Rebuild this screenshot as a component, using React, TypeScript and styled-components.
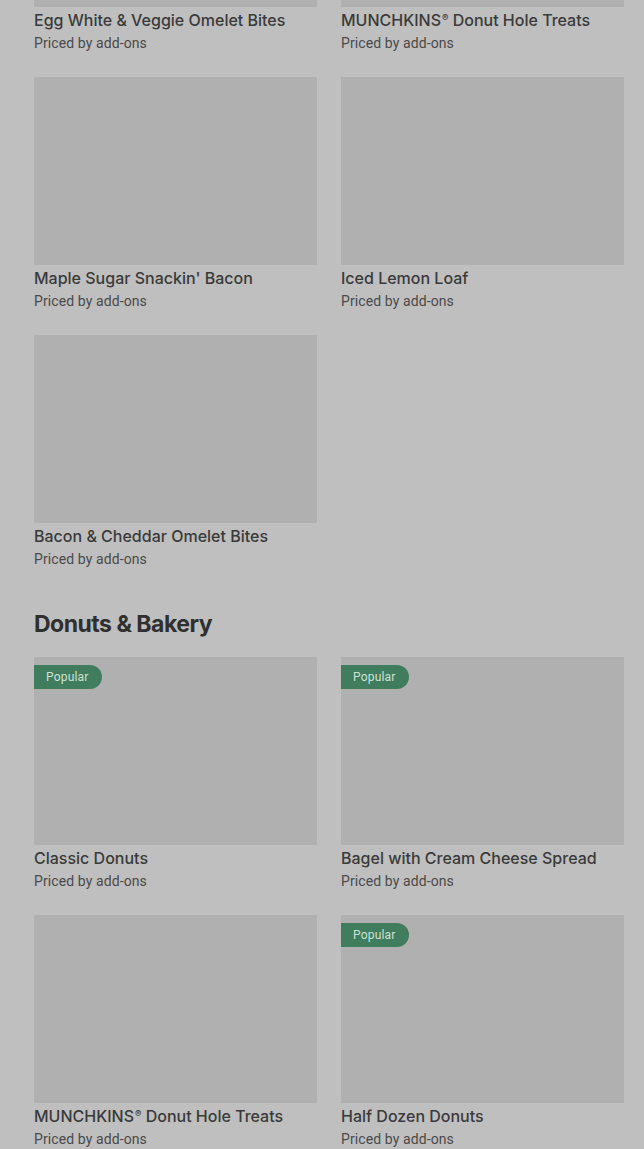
import React from "react";
import styled, { createGlobalStyle } from "styled-components";

const Global = createGlobalStyle`
  html, body { margin: 0; padding: 0; background: #bfbfbf; }
  body { font-family: Roboto, "Noto Sans", sans-serif; overflow: hidden; }
`;

const Page = styled.div`
  width: 644px;
  height: 1149px;
  overflow: hidden;
  background: #bfbfbf;
  box-sizing: border-box;
  padding: 0 20px 0 34px;
`;

const Shift = styled.div`
  margin-top: -181px;
`;

const Grid = styled.div`
  display: grid;
  grid-template-columns: 283px 283px;
  column-gap: 24px;
  row-gap: 24px;
`;

const Heading = styled.h2`
  margin: 39px 0 17px;
  font-family: Inter, "Noto Sans", sans-serif;
  font-size: 23px;
  line-height: 32px;
  font-weight: 700;
  letter-spacing: -0.5px;
  color: #2f2f2f;
`;

const Card = styled.div`
  display: flex;
  flex-direction: column;
`;

const Thumb = styled.div`
  position: relative;
  height: 188px;
  background: #b0b0b0;
`;

const Badge = styled.span`
  position: absolute;
  left: 0;
  top: 8px;
  height: 24px;
  padding: 0 13px 0 12px;
  display: flex;
  align-items: center;
  background: #3f7d5e;
  color: #cfe0d6;
  font-size: 12px;
  letter-spacing: 0.2px;
  border-radius: 0 12px 12px 0;
`;

const Title = styled.div`
  margin-top: 2px;
  font-family: Inter, Roboto, sans-serif;
  font-size: 16px;
  line-height: 22px;
  font-weight: 500;
  color: #3a3a3a;
`;

const Reg = styled.sup`
  font-size: 0.6em;
  line-height: 0;
  vertical-align: 0.55em;
  margin-left: 1px;
`;

const Sub = styled.div`
  margin-top: 2px;
  font-size: 14px;
  line-height: 20px;
  letter-spacing: 0.1px;
  color: #4a4a4a;
`;

type Item = { title: string; popular?: boolean };

const first: Item[] = [
  { title: "Egg White & Veggie Omelet Bites" },
  { title: "MUNCHKINS® Donut Hole Treats" },
  { title: "Maple Sugar Snackin' Bacon" },
  { title: "Iced Lemon Loaf" },
  { title: "Bacon & Cheddar Omelet Bites" },
];

const second: Item[] = [
  { title: "Classic Donuts", popular: true },
  { title: "Bagel with Cream Cheese Spread", popular: true },
  { title: "MUNCHKINS® Donut Hole Treats" },
  { title: "Half Dozen Donuts", popular: true },
];

const renderTitle = (t: string) => {
  const parts = t.split("®");
  if (parts.length === 1) return t;
  return (
    <>
      {parts[0]}
      <Reg>®</Reg>
      {parts[1]}
    </>
  );
};

const ItemCard = ({ item }: { item: Item }) => (
  <Card>
    <Thumb>{item.popular && <Badge>Popular</Badge>}</Thumb>
    <Title>{renderTitle(item.title)}</Title>
    <Sub>Priced by add-ons</Sub>
  </Card>
);

export default function App() {
  return (
    <Page>
      <Global />
      <Shift>
        <Grid>
          {first.map((i, k) => (
            <ItemCard key={k} item={i} />
          ))}
        </Grid>
        <Heading>Donuts &amp; Bakery</Heading>
        <Grid>
          {second.map((i, k) => (
            <ItemCard key={k} item={i} />
          ))}
        </Grid>
      </Shift>
    </Page>
  );
}
